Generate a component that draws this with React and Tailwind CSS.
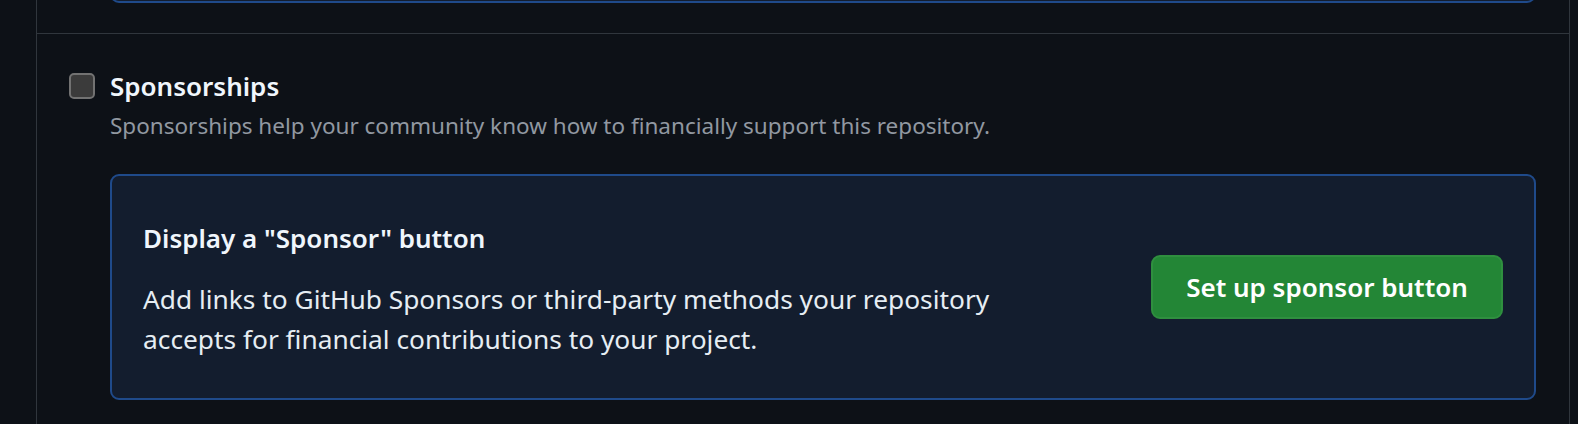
import React from 'react';

const font = { fontFamily: '"Noto Sans", "Liberation Sans", sans-serif' };

export default function App() {
  return (
    <div className="min-h-screen bg-[#0d1117] flex text-[#f0f6fc]" style={font}>
      <div className="w-[36px] shrink-0" />
      <div className="w-[1534px] shrink-0 border-x border-[#30363d] h-[424px] overflow-hidden">
        {/* tail of the previous section's box */}
        <div className="ml-[73px] mr-[33px] h-[3px] overflow-hidden">
          <div className="mt-[-20px] h-[23px] rounded-[9px] border-2 border-[#1f4a8a] bg-[#131d2e]" />
        </div>
        <div className="mt-[30px] border-t border-[#30363d]" />

        <section className="pt-[37px]">
          <div className="flex items-center gap-[15px] pl-[32px]">
            <span className="w-[26px] h-[26px] rounded-[5px] border-2 border-[#727272] bg-[#3b3b3b] shrink-0" />
            <h3 className="text-[26px] leading-[30px] font-semibold">Sponsorships</h3>
          </div>
          <p className="ml-[73px] mt-[10px] text-[22.5px] leading-[30px] text-[#9198a1]">
            Sponsorships help your community know how to financially support this repository.
          </p>

          <div className="ml-[73px] mr-[33px] mt-[33px] h-[226px] rounded-[9px] border-2 border-[#1f4a8a] bg-[#131d2e] flex items-center justify-between px-[31px]">
            <div className="w-[900px] mt-[7px]">
              <h4 className="text-[26px] leading-[32px] font-semibold">Display a "Sponsor" button</h4>
              <p className="mt-[25px] text-[26.3px] leading-[40px] text-[#e6edf3]">
                Add links to GitHub Sponsors or third-party methods your repository accepts for financial contributions to your project.
              </p>
            </div>
            <button className="w-[352px] h-[64px] rounded-[9px] border-2 border-[#2f8f3f] bg-[#238636] text-white text-[26px] font-semibold">
              Set up sponsor button
            </button>
          </div>
        </section>
      </div>
    </div>
  );
}
